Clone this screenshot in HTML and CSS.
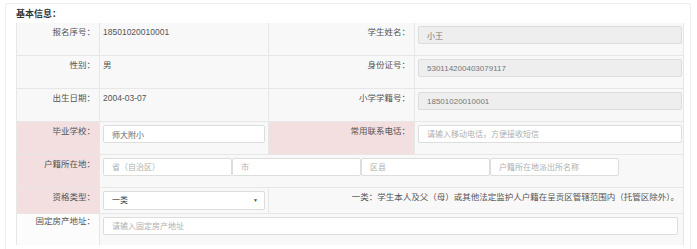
FILE: index.html
```html
<!DOCTYPE html>
<html lang="zh-CN">
<head>
  <meta charset="UTF-8">
  <title>基本信息</title>
  <link rel="stylesheet" href="styles.css">
</head>
<body>
  <div class="panel">
    <h3 class="panel-title">基本信息：</h3>
    <table class="info-table">
      <colgroup>
        <col class="c-label">
        <col class="c-value">
        <col class="c-label2">
        <col class="c-value2">
      </colgroup>
      <tr>
        <th>报名序号：</th>
        <td>18501020010001</td>
        <th>学生姓名：</th>
        <td><input class="field side readonly" type="text" value="小王" readonly></td>
      </tr>
      <tr>
        <th>性别：</th>
        <td>男</td>
        <th>身份证号：</th>
        <td><input class="field side readonly" type="text" value="530114200403079117" readonly></td>
      </tr>
      <tr>
        <th>出生日期：</th>
        <td>2004-03-07</td>
        <th>小学学籍号：</th>
        <td><input class="field side readonly" type="text" value="18501020010001" readonly></td>
      </tr>
      <tr>
        <th class="req">毕业学校：</th>
        <td><input class="field" type="text" value="师大附小"></td>
        <th class="req">常用联系电话：</th>
        <td><input class="field side" type="text" placeholder="请输入移动电话，方便接收短信"></td>
      </tr>
      <tr>
        <th class="req">户籍所在地：</th>
        <td colspan="3">
          <div class="addr-row">
            <input class="field part" type="text" placeholder="省（自治区）">
            <input class="field part" type="text" placeholder="市">
            <input class="field part" type="text" placeholder="区县">
            <input class="field part" type="text" placeholder="户籍所在地派出所名称">
          </div>
        </td>
      </tr>
      <tr class="short">
        <th class="req">资格类型：</th>
        <td>
          <div class="select">一类<span class="caret">▼</span></div>
        </td>
        <td colspan="2" class="note">一类：学生本人及父（母）或其他法定监护人户籍在呈贡区管辖范围内（托管区除外）。</td>
      </tr>
      <tr class="last">
        <th class="plain">固定房产地址：</th>
        <td colspan="3"><input class="field full" type="text" placeholder="请输入固定房产地址"></td>
      </tr>
    </table>
  </div>
</body>
</html>
```

FILE: styles.css
```css
body {
  margin: 0;
  background: #fff;
  font-family: "Liberation Sans", "Noto Sans CJK SC", sans-serif;
  font-size: 8.5px;
  color: #555;
}
.panel {
  border: 1px solid #eee;
  border-bottom: none;
  margin: 3px 6px 0 5px;
  padding: 0 0 4px 10px;
}
.panel-title {
  margin: 0;
  padding-top: 4px;
  height: 15px;
  font-size: 9px;
  font-weight: bold;
  color: #333;
  line-height: 12px;
}
.info-table {
  width: 667px;
  table-layout: fixed;
  border-collapse: collapse;
  background: #f8f8f8;
}
.c-label { width: 83px; }
.c-value { width: 169px; }
.c-label2 { width: 146px; }
.c-value2 { width: 269px; }

.info-table th,
.info-table td {
  border: 1px solid #e7e7e7;
  vertical-align: top;
  height: 26px;
  padding: 3px 4px 3px 3px;
  line-height: 13px;
}
.info-table tr:first-child th,
.info-table tr:first-child td {
  border-top: none;
}
.info-table th {
  font-weight: normal;
  text-align: right;
  color: #555;
  padding-right: 4px;
}
.info-table th.req {
  background: #f3dfdf;
}
.info-table th.plain {
  background: #fcfcfc;
}
.info-table tr.short th,
.info-table tr.short td {
  height: 18px;
}
.info-table tr.last th,
.info-table tr.last td {
  height: 25px;
  border-bottom: none;
}
.info-table tr.last th {
  padding-top: 1px;
}

.field {
  display: block;
  box-sizing: border-box;
  width: 162px;
  height: 18px;
  margin: 0;
  padding: 0 8px;
  border: 1px solid #ddd;
  border-radius: 2px;
  background: #fff;
  font-family: inherit;
  font-size: 8px;
  color: #666;
}
.field::placeholder {
  color: #b0b0b0;
}
.field.readonly {
  background: #eee;
  color: #777;
}
.field.side {
  width: 264px;
}
.field.full {
  width: 575px;
}

.addr-row {
  display: flex;
}
.field.part {
  width: 129px;
  flex: none;
}

.select {
  position: relative;
  box-sizing: border-box;
  height: 19px;
  width: 162px;
  padding: 0 8px;
  border: 1px solid #ddd;
  border-radius: 2px;
  background: #fff;
  line-height: 17px;
  font-size: 8px;
  color: #444;
}
.caret {
  position: absolute;
  right: 6px;
  top: 0;
  font-size: 5px;
  color: #555;
}
.note {
  text-align: right;
  color: #555;
  padding-top: 4px;
}
```
